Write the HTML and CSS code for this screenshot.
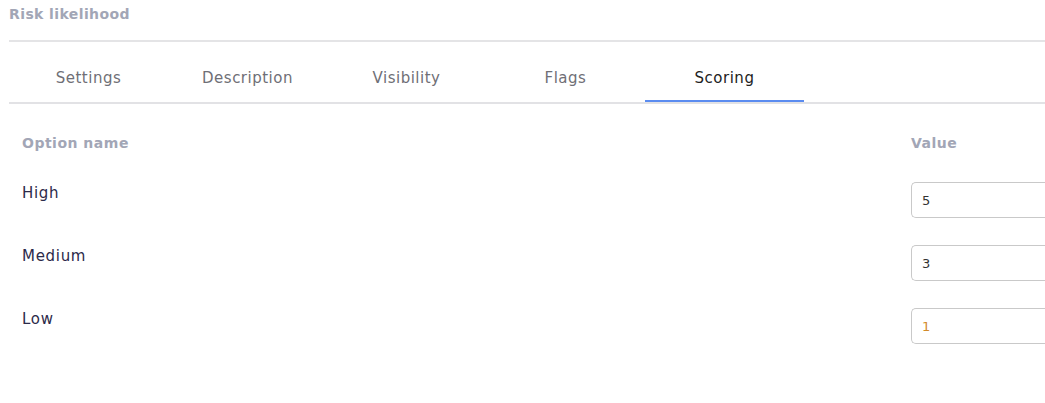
FILE: index.html
```html
<!DOCTYPE html>
<html>
<head>
<meta charset="utf-8">
<link rel="stylesheet" href="styles.css">
</head>
<body>
<div class="page">
  <div class="title">Risk likelihood</div>
  <div class="tabs">
    <div class="tab">Settings</div>
    <div class="tab">Description</div>
    <div class="tab">Visibility</div>
    <div class="tab">Flags</div>
    <div class="tab active">Scoring</div>
  </div>
  <div class="table">
    <div class="head">
      <div class="name">Option name</div>
      <div class="value">Value</div>
    </div>
    <div class="row">
      <div class="name">High</div>
      <div class="value"><div class="input">5</div></div>
    </div>
    <div class="row">
      <div class="name">Medium</div>
      <div class="value"><div class="input">3</div></div>
    </div>
    <div class="row">
      <div class="name">Low</div>
      <div class="value"><div class="input orange">1</div></div>
    </div>
  </div>
</div>
</body>
</html>
```
FILE: styles.css
```css
html, body {
  margin: 0;
  padding: 0;
  background: #fff;
  overflow: hidden;
}
body {
  font-family: "DejaVu Sans", "Open Sans", sans-serif;
  color: #2b2d42;
  width: 1045px;
  height: 403px;
}
.page {
  padding-left: 9px;
}
.title {
  height: 42px;
  box-sizing: border-box;
  padding-top: 5px;
  line-height: 18px;
  font-size: 14px;
  letter-spacing: 0.4px;
  font-weight: 700;
  color: #a2a6b6;
  border-bottom: 2px solid #e4e4e6;
}
.tabs {
  display: flex;
  height: 62px;
  box-sizing: border-box;
  border-bottom: 2px solid #e2e2e5;
}
.tab {
  width: 159px;
  height: 60px;
  box-sizing: border-box;
  text-align: center;
  padding-top: 27px;
  line-height: 18px;
  font-size: 15px;
  letter-spacing: 0.5px;
  color: #6f6f76;
  border-bottom: 2px solid transparent;
}
.tab.active {
  color: #222;
  border-bottom-color: #5b8cf0;
}
.table {
  padding-left: 13px;
}
.head {
  display: flex;
  padding-top: 30px;
  font-size: 14px;
  letter-spacing: 0.5px;
  font-weight: 700;
  color: #a2a6b6;
  line-height: 18px;
}
.head .name, .row .name {
  flex: 1;
}
.head .value {
  width: 134px;
}
.row {
  display: flex;
  height: 63px;
}
.head + .row {
  margin-top: 30px;
}
.row .name {
  font-size: 15px;
  letter-spacing: 0.7px;
  color: #2c2a4a;
  padding-top: 1px;
  line-height: 20px;
}
.row .value {
  width: 134px;
  padding-left: 1px;
}
.input {
  height: 36px;
  box-sizing: border-box;
  border: 1px solid #c9c9c9;
  border-right: none;
  border-radius: 5px 0 0 5px;
  padding-left: 10px;
  display: flex;
  align-items: center;
  font-size: 13px;
  color: #333;
}
.input.orange {
  color: #d28a2a;
}
```
